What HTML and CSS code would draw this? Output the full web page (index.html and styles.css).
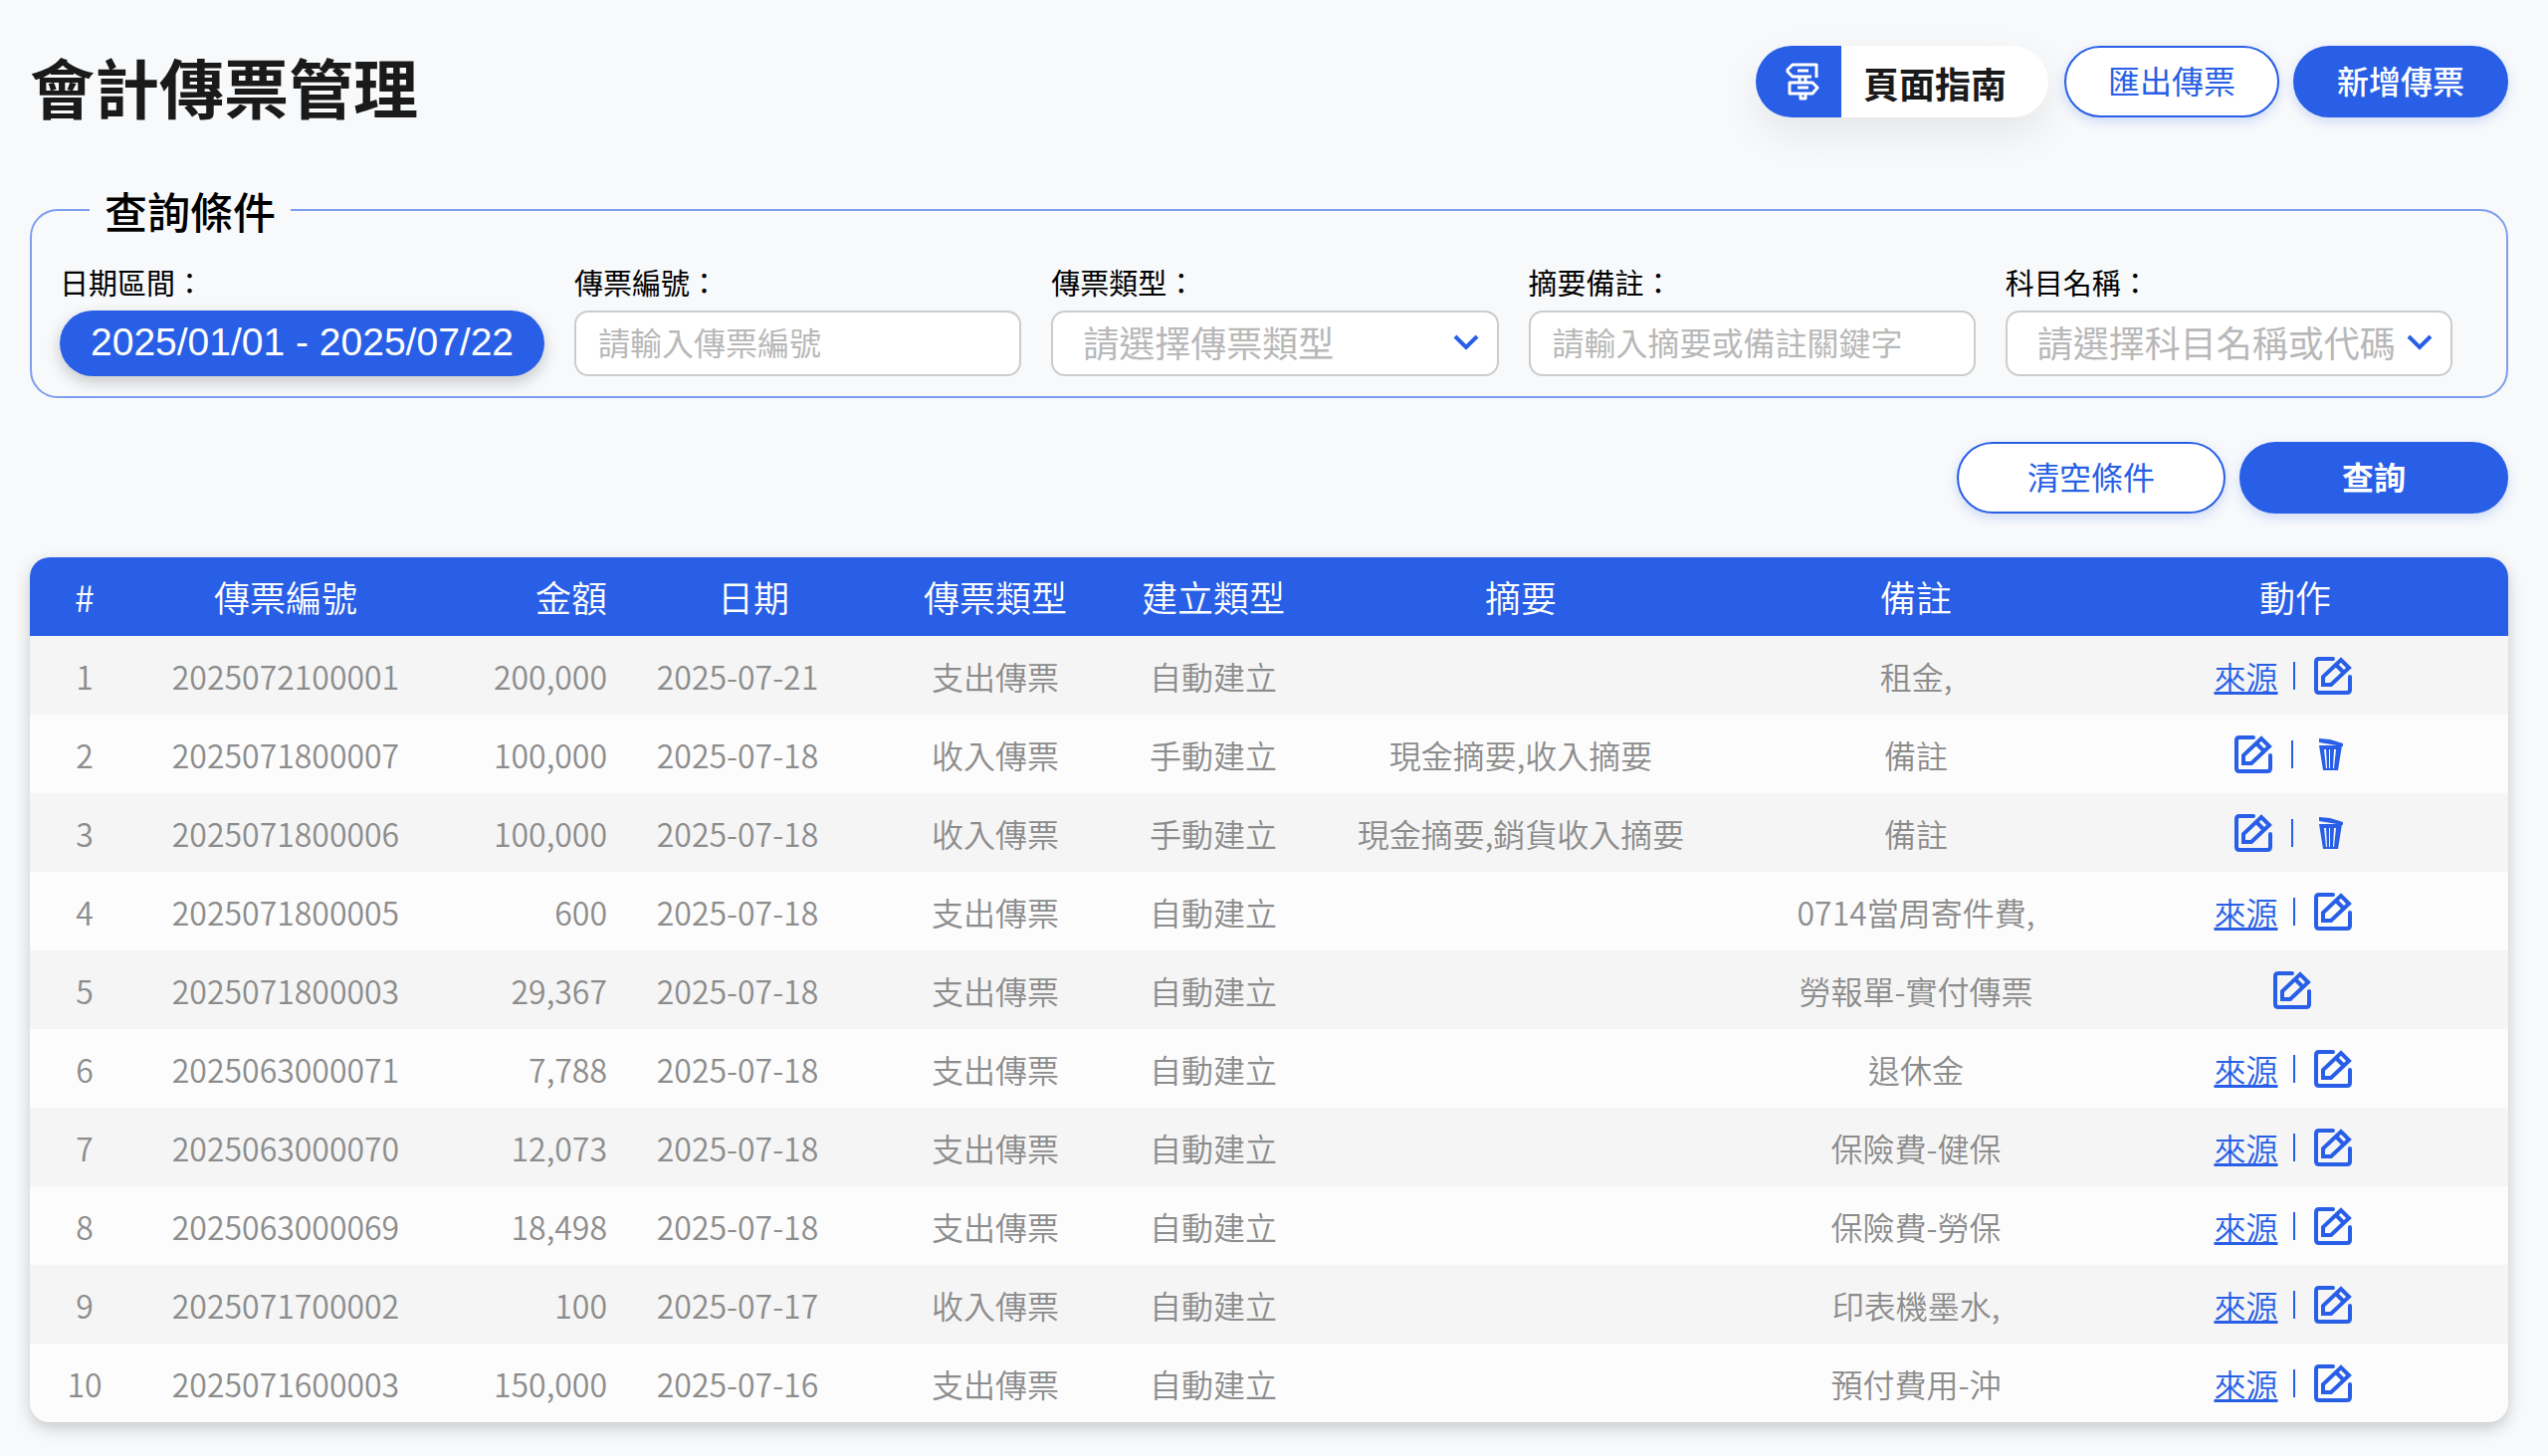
FILE: index.html
```html
<!DOCTYPE html>
<html lang="zh-Hant">
<head>
    <meta charset="UTF-8">
    <meta name="viewport" content="width=device-width, initial-scale=1.0">
    <title>會計傳票管理</title>
    <link rel="stylesheet" href="styles.css">
</head>
<body>
<!-- 共用圖示 -->
<svg class="icon-defs" aria-hidden="true">
    <symbol id="icon-edit" viewBox="0 0 40 40">
        <g fill="none" stroke="currentColor" stroke-width="4" stroke-linejoin="round">
            <path d="M20 3H6Q3 3 3 6V34Q3 37 6 37H34Q37 37 37 34V21" stroke-linecap="round"/>
            <path d="M10 29V21L28 4L36 12L18 29Z" stroke-linejoin="miter"/>
            <path d="M23 9L31 17"/>
        </g>
    </symbol>
    <symbol id="icon-trash" viewBox="0 0 26 34">
        <path d="M1 1L12 2L25 6V9L1 5Z" fill="currentColor"/>
        <path d="M1 8H24L20 33H5ZM6 12L8 31H9L8 12ZM11 12V31H12V12ZM16 12L15 31H16L18 12Z" fill="currentColor" fill-rule="evenodd"/>
    </symbol>
</svg>

<main class="page">
    <header class="page-header">
        <h1>會計傳票管理</h1>
        <div class="header-actions">
            <button type="button" class="guide-btn">
                <span class="guide-icon">
                    <svg viewBox="0 0 34 38" width="34" height="38" fill="none" stroke="currentColor" stroke-width="3" stroke-linejoin="round">
                        <path d="M31 15V2H7L2 7V9L7 14H26"/>
                        <path d="M4 20H27L32 25L27 31H4Z"/>
                        <path d="M12 8H23M12 25H23M14 14V20M20 14V20M15 31V36H20V31"/>
                    </svg>
                </span>
                <span class="guide-text">頁面指南</span>
            </button>
            <button type="button" class="btn btn-outline">匯出傳票</button>
            <button type="button" class="btn btn-primary">新增傳票</button>
        </div>
    </header>

    <form>
        <fieldset class="filters">
            <legend>查詢條件</legend>
            <div class="filter-row">
                <div class="field field-date">
                    <label for="date-range">日期區間：</label>
                    <button type="button" id="date-range" class="date-btn">2025/01/01 - 2025/07/22</button>
                </div>
                <div class="field">
                    <label for="voucher-no">傳票編號：</label>
                    <input type="text" id="voucher-no" placeholder="請輸入傳票編號">
                </div>
                <div class="field">
                    <label for="voucher-type">傳票類型：</label>
                    <div class="select-box">
                        <select id="voucher-type">
                            <option>請選擇傳票類型</option>
                        </select>
                        <svg class="chevron" viewBox="0 0 26 16"><path d="M2 2L13 13L24 2"/></svg>
                    </div>
                </div>
                <div class="field">
                    <label for="memo">摘要備註：</label>
                    <input type="text" id="memo" placeholder="請輸入摘要或備註關鍵字">
                </div>
                <div class="field">
                    <label for="account">科目名稱：</label>
                    <div class="select-box">
                        <select id="account">
                            <option>請選擇科目名稱或代碼</option>
                        </select>
                        <svg class="chevron" viewBox="0 0 26 16"><path d="M2 2L13 13L24 2"/></svg>
                    </div>
                </div>
            </div>
        </fieldset>
        <div class="form-actions">
            <button type="reset" class="btn btn-outline btn-wide">清空條件</button>
            <button type="button" class="btn btn-primary btn-wide btn-search">查詢</button>
        </div>
    </form>

    <div class="table-card">
        <table>
            <colgroup>
                <col class="col-index">
                <col class="col-no">
                <col class="col-amount">
                <col class="col-date">
                <col class="col-type">
                <col class="col-origin">
                <col class="col-summary">
                <col class="col-note">
                <col class="col-action">
            </colgroup>
            <thead>
                <tr>
                    <th>#</th>
                    <th>傳票編號</th>
                    <th class="amount">金額</th>
                    <th>日期</th>
                    <th>傳票類型</th>
                    <th>建立類型</th>
                    <th>摘要</th>
                    <th>備註</th>
                    <th class="action-cell">動作</th>
                </tr>
            </thead>
            <tbody id="voucher-list"></tbody>
        </table>
    </div>
</main>
<script src="script.js"></script>
</body>
</html>
```
FILE: styles.css
```css
* {
    box-sizing: border-box;
}

body {
    margin: 0;
    background-color: #f7f9fb;
    font-family: "Noto Sans CJK TC", sans-serif;
    color: #000;
}

button, input, select {
    font-family: inherit;
}

.icon-defs {
    display: none;
}

.page {
    padding: 46px 40px 32px 30px;
}

.page-header {
    display: flex;
    justify-content: space-between;
    align-items: flex-start;
}

h1 {
    margin: 0;
    font-size: 65px;
    line-height: 80px;
    color: #1a1a1a;
}

.header-actions, .form-actions {
    display: flex;
    justify-content: flex-end;
    gap: 14px;
}

/* 按鈕 */
.btn {
    width: 216px;
    height: 72px;
    padding: 0 0 4px;
    border: 2px solid #285fe6;
    border-radius: 36px;
    font-size: 32px;
    box-shadow: 0 4px 12px rgba(40, 95, 230, 0.2);
}

.btn-outline {
    background-color: #fff;
    color: #285fe6;
}

.btn-primary {
    background-color: #285fe6;
    color: #fff;
    font-weight: 500;
}

.btn-wide {
    width: 270px;
}

.btn-search {
    font-weight: 700;
}

.guide-btn {
    display: flex;
    height: 72px;
    margin-right: 2px;
    padding: 0;
    border: none;
    border-radius: 36px;
    overflow: hidden;
    background-color: #fff;
    color: #1a1a1a;
    box-shadow: 0 16px 40px rgba(0, 0, 0, 0.08);
}

.guide-icon {
    display: flex;
    align-items: center;
    justify-content: center;
    width: 86px;
    height: 72px;
    padding-left: 8px;
    background-color: #285fe6;
    color: #fff;
}

.guide-text {
    padding: 0 42px 0 22px;
    font-size: 36px;
    font-weight: 700;
    line-height: 74px;
}

/* 查詢條件 */
.filters {
    margin: 61px 0 0;
    padding: 29px 54px 20px 28px;
    border: 2px solid #7c9fef;
    border-radius: 28px;
}

legend {
    margin-left: 30px;
    padding: 0 15px;
    font-size: 43px;
    font-weight: 500;
    line-height: 48px;
}

.filter-row {
    display: flex;
    gap: 30px;
}

.field {
    flex: 1;
    min-width: 0;
    display: flex;
    flex-direction: column;
}

.field-date {
    flex: none;
}

.field label {
    margin-bottom: 10px;
    font-size: 29px;
    line-height: 38px;
}

.date-btn {
    height: 66px;
    padding: 0 31px 2px;
    border: none;
    border-radius: 33px;
    background-color: #285fe6;
    color: #fff;
    font-family: "Liberation Sans", sans-serif;
    font-size: 39px;
    box-shadow: 0 6px 16px rgba(0, 0, 0, 0.2);
}

.field input, .field select {
    width: 100%;
    height: 66px;
    border: 2px solid #ccc;
    border-radius: 14px;
    background-color: #fff;
}

.field input {
    padding: 0 22px 4px;
    font-size: 32px;
}

.field input::placeholder {
    color: #b8b8b8;
}

.field select {
    appearance: none;
    padding: 0 46px 4px 30px;
    font-size: 36px;
    color: #b8b8b8;
}

.select-box {
    position: relative;
}

.chevron {
    position: absolute;
    right: 20px;
    top: 24px;
    width: 26px;
    height: 16px;
    fill: none;
    stroke: #285fe6;
    stroke-width: 4;
    pointer-events: none;
}

.form-actions {
    margin: 44px 0;
}

/* 傳票列表 */
.table-card {
    border-radius: 20px;
    overflow: hidden;
    box-shadow: 0 6px 16px rgba(0, 0, 0, 0.2);
}

table {
    width: 100%;
    table-layout: fixed;
    border-collapse: collapse;
    text-align: center;
}

.col-index { width: 110px; }
.col-no { width: 294px; }
.col-amount { width: 210px; }
.col-date { width: 226px; }
.col-type { width: 260px; }
.col-origin { width: 178px; }
.col-summary { width: 440px; }
.col-note { width: 354px; }
.col-action { width: 418px; }

th {
    height: 79px;
    padding: 0 0 2px;
    background-color: #285fe6;
    color: #fff;
    font-size: 36px;
    font-weight: 350;
}

td {
    height: 79px;
    padding: 0;
    color: #8c8c8c;
    font-size: 32px;
    font-weight: 350;
    line-height: 40px;
}

th.amount, td.amount {
    padding-right: 34px;
    text-align: right;
}

td.date {
    padding-right: 32px;
}

th.action-cell {
    padding-right: 10px;
}

td.action-cell {
    padding-right: 16px;
}

tbody tr:nth-child(odd) {
    background-color: #f5f5f5;
}

tbody tr:nth-child(even) {
    background-color: #fcfcfc;
}

.actions {
    display: flex;
    justify-content: center;
    align-items: center;
}

.actions a, .actions button {
    color: #285fe6;
}

.actions a {
    margin-right: 15px;
}

.actions button {
    display: flex;
    justify-content: center;
    width: 40px;
    margin: 0 18px;
    padding: 0;
    border: none;
    background: none;
}

.divider {
    width: 2px;
    height: 28px;
    background-color: #285fe6;
}

.icon-edit {
    width: 40px;
    height: 40px;
}

.icon-trash {
    width: 26px;
    height: 34px;
}
```
FILE: script.js
```js
var vouchers = [
    ['2025072100001', '200,000', '2025-07-21', '支出傳票', '自動建立', '', '租金,', 'source'],
    ['2025071800007', '100,000', '2025-07-18', '收入傳票', '手動建立', '現金摘要,收入摘要', '備註', 'delete'],
    ['2025071800006', '100,000', '2025-07-18', '收入傳票', '手動建立', '現金摘要,銷貨收入摘要', '備註', 'delete'],
    ['2025071800005', '600', '2025-07-18', '支出傳票', '自動建立', '', '0714當周寄件費,', 'source'],
    ['2025071800003', '29,367', '2025-07-18', '支出傳票', '自動建立', '', '勞報單-實付傳票', 'edit'],
    ['2025063000071', '7,788', '2025-07-18', '支出傳票', '自動建立', '', '退休金', 'source'],
    ['2025063000070', '12,073', '2025-07-18', '支出傳票', '自動建立', '', '保險費-健保', 'source'],
    ['2025063000069', '18,498', '2025-07-18', '支出傳票', '自動建立', '', '保險費-勞保', 'source'],
    ['2025071700002', '100', '2025-07-17', '收入傳票', '自動建立', '', '印表機墨水,', 'source'],
    ['2025071600003', '150,000', '2025-07-16', '支出傳票', '自動建立', '', '預付費用-沖', 'source']
];

var divider = '<span class="divider"></span>';
var editBtn = '<button type="button" aria-label="編輯"><svg class="icon-edit"><use href="#icon-edit"/></svg></button>';
var deleteBtn = '<button type="button" aria-label="刪除"><svg class="icon-trash"><use href="#icon-trash"/></svg></button>';
var actions = {
    source: '<a href="#">來源</a>' + divider + editBtn,
    delete: editBtn + divider + deleteBtn,
    edit: editBtn
};

var rows = '';
vouchers.forEach(function(voucher, i) {
    rows += '<tr><td>' + (i + 1) + '</td>';
    rows += '<td>' + voucher[0] + '</td>';
    rows += '<td class="amount">' + voucher[1] + '</td>';
    rows += '<td class="date">' + voucher[2] + '</td>';
    for (var j = 3; j < 7; j++) {
        rows += '<td>' + voucher[j] + '</td>';
    }
    rows += '<td class="action-cell"><div class="actions">' + actions[voucher[7]] + '</div></td></tr>';
});
document.getElementById('voucher-list').innerHTML = rows;
```
